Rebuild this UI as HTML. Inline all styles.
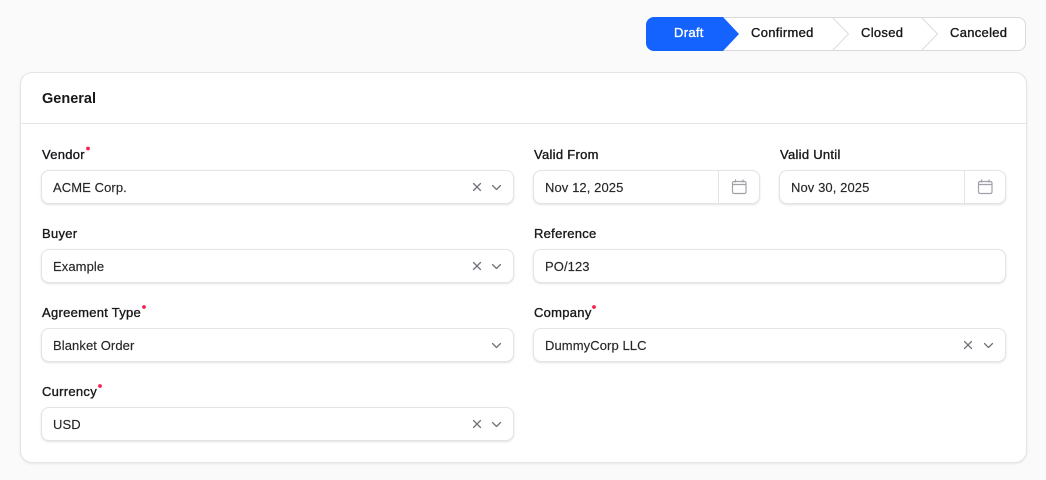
<!DOCTYPE html>
<html><head><meta charset="utf-8">
<style>
*{box-sizing:border-box}
html,body{margin:0;padding:0;width:1046px;height:480px;overflow:hidden;background:#fafafa;font-family:"Liberation Sans",sans-serif;color:#18181b}
.a{position:absolute}
.t{position:absolute;white-space:nowrap;font-size:13px;line-height:16px}
.l{-webkit-text-stroke:.35px #18181b;letter-spacing:.28px}
.s{-webkit-text-stroke:.35px currentColor;letter-spacing:.3px}
.v{-webkit-text-stroke:.15px #27272a;letter-spacing:.09px;color:#27272a}
.f{position:absolute;height:34px;background:#fff;border:1px solid #e4e4e7;border-radius:8px;box-shadow:0 1px 2px rgba(0,0,0,.12)}
svg{position:absolute;overflow:visible}
</style></head><body>

<!-- Stepper -->
<div class="a" style="left:646px;top:17px;width:380px;height:34px;background:#fff;border:1px solid #d9d9dd;border-radius:8px"></div>
<svg style="left:0;top:0" width="1046" height="60" fill="none">
<path d="M832.5 17.5L848.5 34L832.5 50.5M921.5 17.5L937.5 34L921.5 50.5" stroke="#dcdce0"/>
<path d="M654 17H723L739 34L723 51H654a8 8 0 0 1-8-8V25a8 8 0 0 1 8-8Z" fill="#1463ff"/>
</svg>
<div class="t s" style="left:674px;top:25px;color:#fff">Draft</div>
<div class="t s" style="left:751px;top:25px">Confirmed</div>
<div class="t s" style="left:861px;top:25px">Closed</div>
<div class="t s" style="left:950px;top:25px">Canceled</div>

<!-- Card -->
<div class="a" style="left:20px;top:72px;width:1007px;height:391px;background:#fff;border:1px solid #e4e4e7;border-radius:12px;box-shadow:0 1px 2px rgba(0,0,0,.08)"></div>
<div class="a" style="left:21px;top:123px;width:1005px;height:1px;background:#e4e4e7"></div>
<div class="t" style="left:42px;top:91px;font-size:14.5px;font-weight:bold;letter-spacing:0">General</div>

<!-- Labels -->
<div class="t l" style="left:42px;top:147px">Vendor</div>
<div class="t l" style="left:534px;top:147px">Valid From</div>
<div class="t l" style="left:780px;top:147px">Valid Until</div>
<div class="t l" style="left:42px;top:226px">Buyer</div>
<div class="t l" style="left:534px;top:226px">Reference</div>
<div class="t l" style="left:42px;top:305px">Agreement Type</div>
<div class="t l" style="left:534px;top:305px">Company</div>
<div class="t l" style="left:42px;top:384px">Currency</div>

<!-- Fields -->
<div class="f" style="left:41px;top:170px;width:473px"></div>
<div class="f" style="left:533px;top:170px;width:227px"></div>
<div class="f" style="left:779px;top:170px;width:227px"></div>
<div class="f" style="left:41px;top:249px;width:473px"></div>
<div class="f" style="left:533px;top:249px;width:473px"></div>
<div class="f" style="left:41px;top:328px;width:473px"></div>
<div class="f" style="left:533px;top:328px;width:473px"></div>
<div class="f" style="left:41px;top:407px;width:473px"></div>
<div class="a" style="left:718px;top:171px;width:1px;height:32px;background:#e4e4e7"></div>
<div class="a" style="left:964px;top:171px;width:1px;height:32px;background:#e4e4e7"></div>

<!-- Values -->
<div class="t v" style="left:53px;top:180px">ACME Corp.</div>
<div class="t v" style="left:545px;top:180px">Nov 12, 2025</div>
<div class="t v" style="left:791px;top:180px">Nov 30, 2025</div>
<div class="t v" style="left:53px;top:259px">Example</div>
<div class="t v" style="left:545px;top:259px">PO/123</div>
<div class="t v" style="left:53px;top:338px">Blanket Order</div>
<div class="t v" style="left:545px;top:338px">DummyCorp LLC</div>
<div class="t v" style="left:53px;top:417px">USD</div>

<!-- Icons -->
<svg style="left:0;top:0" width="1046" height="480" fill="none" stroke="#71717a" stroke-width="1.25" stroke-linecap="round" stroke-linejoin="round">
<g fill="#f5224f" stroke="none">
<circle cx="88" cy="148.5" r="1.9"/>
<circle cx="144" cy="307" r="1.9"/>
<circle cx="594" cy="307" r="1.9"/>
<circle cx="100" cy="386" r="1.9"/>
</g>
<path d="M473.5 183.5L480.5 190.5M480.5 183.5L473.5 190.5"/>
<path d="M492.5 185.5L496.5 189.5L500.5 185.5"/>
<path d="M473.5 262.5L480.5 269.5M480.5 262.5L473.5 269.5"/>
<path d="M492.5 264.5L496.5 268.5L500.5 264.5"/>
<path d="M492.5 343.5L496.5 347.5L500.5 343.5"/>
<path d="M964.5 341.5L971.5 348.5M971.5 341.5L964.5 348.5"/>
<path d="M984.5 343.5L988.5 347.5L992.5 343.5"/>
<path d="M473.5 420.5L480.5 427.5M480.5 420.5L473.5 427.5"/>
<path d="M492.5 422.5L496.5 426.5L500.5 422.5"/>
<g stroke="#a1a1aa" stroke-width="1.2">
<rect x="732.5" y="181.5" width="13.5" height="12" rx="1.5"/><path d="M732.5 184.5H746M735.5 180V182M743 180V182"/>
<rect x="978.5" y="181.5" width="13.5" height="12" rx="1.5"/><path d="M978.5 184.5H992M981.5 180V182M989 180V182"/>
</g>
</svg>
</body></html>
